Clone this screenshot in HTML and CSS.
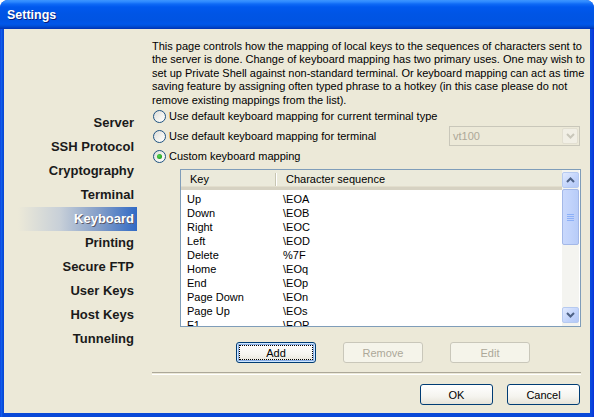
FILE: index.html
```html
<!DOCTYPE html>
<html>
<head>
<meta charset="utf-8">
<title>Settings</title>
<link rel="stylesheet" href="styles.css">
</head>
<body>
<div class="window">
  <div class="titlebar"><span class="title">Settings</span></div>
  <div class="frame">
    <div class="client">
      <nav class="sidebar">
        <div class="nav-item">Server</div>
        <div class="nav-item">SSH Protocol</div>
        <div class="nav-item">Cryptography</div>
        <div class="nav-item">Terminal</div>
        <div class="nav-item active">Keyboard</div>
        <div class="nav-item">Printing</div>
        <div class="nav-item">Secure FTP</div>
        <div class="nav-item">User Keys</div>
        <div class="nav-item">Host Keys</div>
        <div class="nav-item">Tunneling</div>
      </nav>
      <main class="content">
        <p class="intro">This page controls how the mapping of local keys to the sequences of characters sent to<br>the server is done. Change of keyboard mapping has two primary uses. One may wish to<br>set up Private Shell against non-standard terminal. Or keyboard mapping can act as time<br>saving feature by assigning often typed phrase to a hotkey (in this case please do not<br>remove existing mappings from the list).</p>
        <div class="options">
          <div class="radio-row"><span class="radio"></span><span class="radio-label">Use default keyboard mapping for current terminal type</span></div>
          <div class="radio-row"><span class="radio"></span><span class="radio-label">Use default keyboard mapping for terminal</span>
            <div class="combo"><span class="combo-text">vt100</span><span class="combo-btn"><svg width="9" height="6" viewBox="0 0 9 6"><path d="M1 1 L4.5 4.5 L8 1" fill="none" stroke="#C9C7BA" stroke-width="2"/></svg></span></div>
          </div>
          <div class="radio-row"><span class="radio checked"></span><span class="radio-label">Custom keyboard mapping</span></div>
        </div>
        <div class="listbox">
          <div class="list-main">
            <div class="list-header">
              <div class="hcell hcell-key">Key</div>
              <div class="hcell hcell-seq">Character sequence</div>
            </div>
            <div class="rows">
              <div class="row"><span class="c-key">Up</span><span class="c-seq">\EOA</span></div>
              <div class="row"><span class="c-key">Down</span><span class="c-seq">\EOB</span></div>
              <div class="row"><span class="c-key">Right</span><span class="c-seq">\EOC</span></div>
              <div class="row"><span class="c-key">Left</span><span class="c-seq">\EOD</span></div>
              <div class="row"><span class="c-key">Delete</span><span class="c-seq">%7F</span></div>
              <div class="row"><span class="c-key">Home</span><span class="c-seq">\EOq</span></div>
              <div class="row"><span class="c-key">End</span><span class="c-seq">\EOp</span></div>
              <div class="row"><span class="c-key">Page Down</span><span class="c-seq">\EOn</span></div>
              <div class="row"><span class="c-key">Page Up</span><span class="c-seq">\EOs</span></div>
              <div class="row"><span class="c-key">F1</span><span class="c-seq">\EOP</span></div>
            </div>
          </div>
          <div class="vscroll">
            <div class="sbtn"><svg width="9" height="6" viewBox="0 0 9 6"><path d="M1 5 L4.5 1.5 L8 5" fill="none" stroke="#4D6185" stroke-width="2"/></svg></div>
            <div class="thumb"><span class="grip"></span></div>
            <div class="track"></div>
            <div class="sbtn"><svg width="9" height="6" viewBox="0 0 9 6"><path d="M1 1 L4.5 4.5 L8 1" fill="none" stroke="#4D6185" stroke-width="2"/></svg></div>
          </div>
        </div>
        <div class="list-buttons">
          <button class="btn focused">Add</button>
          <button class="btn" disabled>Remove</button>
          <button class="btn" disabled>Edit</button>
        </div>
        <div class="separator"></div>
        <div class="dialog-buttons">
          <button class="btn btn-dialog">OK</button>
          <button class="btn btn-dialog">Cancel</button>
        </div>
      </main>
    </div>
  </div>
</div>
</body>
</html>
```

FILE: styles.css
```css
html, body {
  margin: 0;
  padding: 0;
  background: #ffffff;
}

.window {
  width: 594px;
  height: 417px;
  display: flex;
  flex-direction: column;
  background: #0A48D8;
  border-radius: 8px 8px 0 0;
  overflow: hidden;
  font-family: "Liberation Sans", Arial, sans-serif;
  font-size: 11px;
  color: #000;
}

.titlebar {
  height: 29px;
  flex: none;
  display: flex;
  align-items: center;
  padding-left: 7px;
  padding-top: 1px;
  box-sizing: border-box;
  background: linear-gradient(to bottom,
    #3D95FF 0px, #2B87FF 2px, #0F6AF6 4px, #0058EE 7px,
    #0055E5 14px, #0054E3 20px, #0057EA 24px, #0050D8 26px, #003CC0 28px, #0034B4 29px);
}

.title {
  color: #ffffff;
  font-weight: bold;
  font-size: 12.5px;
  text-shadow: 1px 1px 0 #0A1E7A;
  letter-spacing: 0;
}

.frame {
  flex: 1;
  display: flex;
  padding: 0 4px 4px 4px;
  background: linear-gradient(to right, #0831D9 0px, #1667EE 1px, #0A55E4 2px, #0848D8 3px, #0848D8 590px, #0A4CDD 591px, #0831D9 594px);
}

.client {
  flex: 1;
  display: flex;
  background: #ECE9D8;
}

.sidebar {
  width: 148px;
  flex: none;
  padding-top: 82px;
  box-sizing: border-box;
}

.nav-item {
  margin-left: 14px;
  width: 119px;
  height: 24px;
  line-height: 24px;
  box-sizing: border-box;
  padding-right: 3px;
  text-align: right;
  font-weight: bold;
  font-size: 13px;
  color: #1a1a1a;
}

.nav-item.active {
  color: #ffffff;
  background: linear-gradient(to right, #ECE9D8 0%, #C8D0D8 35%, #7F9BC8 70%, #316AC5 100%);
  text-shadow: 1px 1px 0 #5a5a6a;
}

.content {
  flex: 1;
  padding-top: 11px;
  display: flex;
  flex-direction: column;
}

.intro {
  margin: 0;
  line-height: 13.4px;
  white-space: nowrap;
  font-size: 11px;
}

.options {
  display: flex;
  flex-direction: column;
  margin-top: -1px;
}

.radio-row {
  height: 20px;
  display: flex;
  align-items: center;
  width: 429px;
}

.radio {
  width: 13px;
  height: 13px;
  box-sizing: border-box;
  border-radius: 50%;
  border: 1px solid #1C5180;
  background: linear-gradient(135deg, #DCDCD7 0%, #F4F4F0 60%, #FFFFFF 100%);
  margin-left: 1px;
  margin-right: 3px;
  position: relative;
  flex: none;
}

.radio.checked::after {
  content: "";
  position: absolute;
  left: 3px;
  top: 3px;
  width: 5px;
  height: 5px;
  border-radius: 50%;
  background: radial-gradient(circle at 40% 40%, #55D551 0%, #21A121 70%, #1A7E1A 100%);
}

.combo {
  margin-left: auto;
  margin-right: 1px;
  width: 131px;
  height: 20px;
  box-sizing: border-box;
  border: 1px solid #C9C7BA;
  background: #ECE9D8;
  display: flex;
  align-items: center;
}

.combo-text {
  flex: 1;
  padding-left: 3px;
  color: #ACA899;
  font-size: 11px;
}

.combo-btn {
  width: 16px;
  height: 16px;
  margin-right: 1px;
  box-sizing: border-box;
  border: 1px solid #E2DFD1;
  border-radius: 2px;
  background: #F1EFE5;
  display: flex;
  align-items: center;
  justify-content: center;
}

.listbox {
  margin-top: 3px;
  margin-left: 28px;
  width: 401px;
  height: 158px;
  box-sizing: border-box;
  border: 1px solid #7F9DB9;
  background: #ffffff;
  display: flex;
  overflow: hidden;
}

.list-main {
  flex: 1;
  display: flex;
  flex-direction: column;
  overflow: hidden;
}

.list-header {
  height: 20px;
  flex: none;
  display: flex;
  background: #EBEADB;
  border-bottom: 3px solid #D6D2C2;
  box-sizing: border-box;
  box-shadow: inset 0 -1px 0 #E2DECD;
}

.hcell {
  display: flex;
  align-items: center;
  box-sizing: border-box;
  height: 17px;
}

.hcell-key {
  width: 95px;
  padding-left: 9px;
  position: relative;
}

.hcell-key::after {
  content: "";
  position: absolute;
  right: 0;
  top: 3px;
  width: 1px;
  height: 13px;
  background: #C7C5B2;
  box-shadow: 1px 0 0 #ffffff;
}

.hcell-seq {
  padding-left: 10px;
}

.rows {
  padding-top: 2px;
}

.row {
  height: 14px;
  line-height: 14px;
  display: flex;
  white-space: nowrap;
}

.c-key {
  width: 102px;
  padding-left: 6px;
  box-sizing: border-box;
}

.vscroll {
  width: 17px;
  flex: none;
  background: #F4F4F0;
  display: flex;
  flex-direction: column;
  padding: 2px 0 3px 0;
  box-sizing: border-box;
  margin-right: 1px;
  margin-top: 0;
}

.sbtn {
  height: 16px;
  flex: none;
  box-sizing: border-box;
  border: 1px solid #B6CAF0;
  border-radius: 2px;
  background: linear-gradient(135deg, #E1EAFE 0%, #C1D3FB 60%, #B4C8F6 100%);
  display: flex;
  align-items: center;
  justify-content: center;
}

.thumb {
  height: 56px;
  flex: none;
  margin-top: 1px;
  box-sizing: border-box;
  border: 1px solid #A3B8E8;
  border-radius: 2px;
  background: linear-gradient(to right, #C9D8FC 0%, #C1D3FB 50%, #B8CCF8 100%);
  display: flex;
  align-items: center;
  justify-content: center;
}

.grip {
  width: 7px;
  height: 7px;
  background: repeating-linear-gradient(to bottom, #8CB0F8 0px, #8CB0F8 1px, transparent 1px, transparent 2px);
}

.track {
  flex: 1;
}

.list-buttons {
  margin-top: 15px;
  margin-left: 84px;
  display: flex;
  gap: 27px;
}

.btn {
  width: 80px;
  height: 21px;
  box-sizing: border-box;
  border: 1px solid #003C74;
  border-radius: 3px;
  background: linear-gradient(to bottom, #FFFFFF 0%, #F5F4EF 60%, #E6E3D8 100%);
  font-family: "Liberation Sans", Arial, sans-serif;
  font-size: 11px;
  color: #000;
  padding: 0;
  position: relative;
}

.btn:disabled {
  border-color: #C9C7BA;
  background: #F5F4EA;
  color: #ACA899;
}

.btn.focused {
  box-shadow: inset 0 0 0 1px #CEE7FF, inset 0 0 0 2px #89ADE4;
}

.btn.focused::after {
  content: "";
  position: absolute;
  left: 2px;
  top: 2px;
  right: 2px;
  bottom: 2px;
  border: 1px dotted #000;
}

.separator {
  margin-top: 9px;
  width: 429px;
  height: 1px;
  border-top: 1px solid #ACA899;
  border-bottom: 1px solid #FFFFFF;
}

.dialog-buttons {
  margin-top: 9px;
  width: 429px;
  display: flex;
  justify-content: flex-end;
  gap: 14px;
  padding-right: 1px;
  box-sizing: border-box;
}

.btn-dialog {
  width: 73px;
}
```
